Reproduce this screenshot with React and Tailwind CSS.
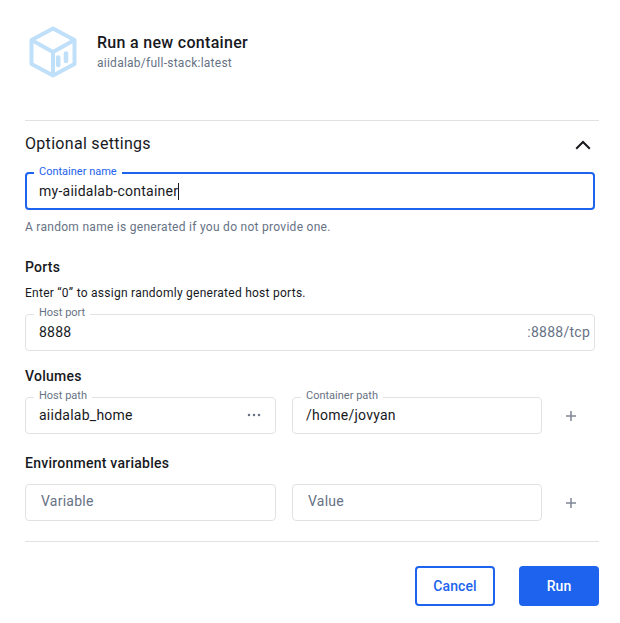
import React from "react";

function Field({ label, width, focused, children }) {
  return (
    <div
      className={`relative flex items-center rounded-[4px] bg-white ${width} ${
        focused ? "h-[38px] border-2 border-[#1d63ed] pl-[12px]" : "h-[37px] border border-[#e1e2e6] pl-[13px] pr-[4px]"
      }`}
    >
      {label && (
        <span
          className={`absolute bg-white px-[5px] text-[11px] leading-[13px] ${
            focused ? "left-[7px] top-[-9px] text-[#1d63ed]" : "left-[8px] top-[-9px] text-[#677285]"
          }`}
        >
          {label}
        </span>
      )}
      {children}
    </div>
  );
}

function FieldInput({ value, placeholder }) {
  return (
    <input
      readOnly
      value={value || ""}
      placeholder={placeholder}
      className={`min-w-0 flex-1 bg-transparent text-[14px] tracking-[0.25px] text-[#17191e] outline-none placeholder:text-[#677285] ${
        placeholder ? "pb-[2px] pl-[2px]" : ""
      }`}
    />
  );
}

function Plus() {
  return (
    <svg width="12" height="12" viewBox="0 0 12 12" className="ml-[23px] text-[#7d8797]">
      <path d="M6 1v10M1 6h10" stroke="currentColor" strokeWidth="1.5" fill="none" />
    </svg>
  );
}

function SectionTitle({ children, className }) {
  return <h3 className={`text-[14px] font-medium leading-[20px] tracking-[0.25px] text-[#17191e] ${className}`}>{children}</h3>;
}

export default function App() {
  return (
    <div className="h-[623px] w-[620px] bg-white px-[25px] pt-[26px] font-['Roboto',sans-serif] text-[#17191e]">
      {/* En-tete */}
      <div className="flex h-[94px] items-start">
        <svg width="50" height="52" viewBox="0 0 50 52" className="ml-[3px] shrink-0" fill="none" stroke="#c0dff9" strokeWidth="4" strokeLinejoin="round">
          <path d="M25 2.5 46.5 14v24L25 49.5 3.5 38V14Z" />
          <path d="M3.5 14 25 26 46.5 14M25 26v23.5" />
          <path d="M30.2 31.5v7.5M38 27.5v7.5" strokeWidth="4.6" strokeLinecap="round" />
        </svg>
        <div className="ml-[19px] pt-[7px]">
          <h1 className="text-[16px] font-medium leading-[20px] tracking-[0.3px] text-[#17191e]">Run a new container</h1>
          <p className="mt-[2px] text-[12px] leading-[16px] tracking-[0.25px] text-[#677285]">aiidalab/full-stack:latest</p>
        </div>
      </div>

      <div className="w-[574px] border-t border-[#e1e2e6]" />

      {/* Optional settings */}
      <div className="flex h-[51px] w-[574px] items-start justify-between pr-[8px] pt-[13px]">
        <h2 className="text-[16px] leading-[20px] tracking-[0.3px]">Optional settings</h2>
        <svg width="16" height="10" viewBox="0 0 16 10" fill="none" stroke="#17191e" strokeWidth="2" className="mt-[6px]">
          <path d="M1.2 8.8 8 2l6.8 6.8" />
        </svg>
      </div>

      <Field label="Container name" width="w-[570px]" focused>
        <span className="text-[14px] tracking-[0.25px]">my-aiidalab-container</span>
        <span className="h-[17px] w-px bg-[#17191e]" />
      </Field>
      <p className="mt-[9px] text-[12px] leading-[16px] tracking-[0.28px] text-[#677285]">A random name is generated if you do not provide one.</p>

      <SectionTitle className="mt-[22px]">Ports</SectionTitle>
      <p className="mt-[8px] text-[12px] leading-[16px] tracking-[0.26px] text-[#17191e]">Enter “0” to assign randomly generated host ports.</p>
      <div className="mt-[13px]">
        <Field label="Host port" width="w-[570px]">
          <FieldInput value="8888" />
          <span className="text-[14px] tracking-[0.25px] text-[#677285]">:8888/tcp</span>
        </Field>
      </div>

      <SectionTitle className="mt-[15px]">Volumes</SectionTitle>
      <div className="mt-[11px] flex items-center">
        <Field label="Host path" width="w-[251px]">
          <FieldInput value="aiidalab_home" />
          <svg width="14" height="4" viewBox="0 0 14 4" className="mb-[2px] mr-[10px] text-[#677285]" fill="currentColor">
            <circle cx="2" cy="2" r="1.25" />
            <circle cx="7" cy="2" r="1.25" />
            <circle cx="12" cy="2" r="1.25" />
          </svg>
        </Field>
        <div className="ml-[16px]">
          <Field label="Container path" width="w-[250px]">
            <FieldInput value="/home/jovyan" />
          </Field>
        </div>
        <Plus />
      </div>

      <SectionTitle className="mt-[19px]">Environment variables</SectionTitle>
      <div className="mt-[11px] flex items-center">
        <Field width="w-[251px]">
          <FieldInput placeholder="Variable" />
        </Field>
        <div className="ml-[16px]">
          <Field width="w-[250px]">
            <FieldInput placeholder="Value" />
          </Field>
        </div>
        <Plus />
      </div>

      <div className="mt-[20px] w-[574px] border-t border-[#e1e2e6]" />

      {/* Actions */}
      <div className="mt-[24px] flex w-[574px] justify-end gap-[24px]">
        <button className="h-[40px] w-[80px] rounded-[4px] border-2 border-[#1d63ed] bg-white text-[14px] font-medium tracking-[0.1px] text-[#1d63ed]">Cancel</button>
        <button className="h-[40px] w-[80px] rounded-[4px] bg-[#1d63ed] text-[14px] font-medium tracking-[0.1px] text-white">Run</button>
      </div>
    </div>
  );
}
